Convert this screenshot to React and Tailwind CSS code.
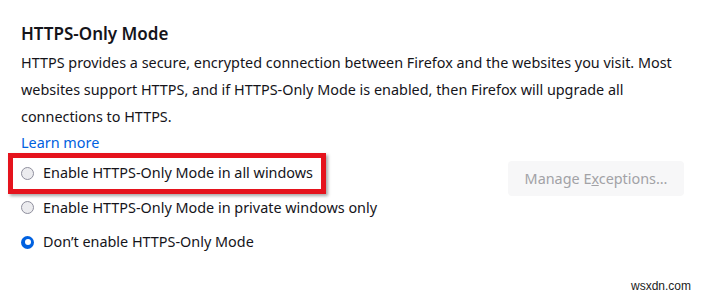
import React from "react";

function Radio({ checked }) {
  if (checked) {
    return (
      <span className="w-[13px] h-[13px] rounded-full bg-[#0061e0] flex items-center justify-center shrink-0">
        <span className="w-[6px] h-[6px] rounded-full bg-white" />
      </span>
    );
  }
  return (
    <span className="w-[13px] h-[13px] rounded-full border border-[#8f8f9d] bg-[#ececef] shrink-0" />
  );
}

function Option({ label, checked, highlight }) {
  return (
    <div className="relative inline-flex items-center gap-[9px] h-[34.5px] self-start">
      {highlight && (
        <div className="absolute -left-[13px] -right-[13px] -top-[3px] -bottom-[3px] border-[5px] border-[#e5131d] shadow-[2px_2px_3px_rgba(0,0,0,0.35)]" />
      )}
      <Radio checked={checked} />
      <span>{label}</span>
    </div>
  );
}

export default function App() {
  return (
    <div className="w-[702px] h-[299px] bg-white relative overflow-hidden text-[#15141a] text-[14.4px] font-['Noto_Sans',sans-serif]">
      <div className="pl-[21px] pt-[22px] pr-[18px]">
        <h2 className="text-[17px] font-semibold leading-[24px]">HTTPS-Only Mode</h2>
        <p className="mt-[3px] leading-[27px]">
          HTTPS provides a secure, encrypted connection between Firefox and the websites you visit. Most
          <br />
          websites support HTTPS, and if HTTPS-Only Mode is enabled, then Firefox will upgrade all
          <br />
          connections to HTTPS.
        </p>
        <a className="block text-[#0061e0] leading-[24px] mt-[1px]">Learn more</a>

        <div className="flex justify-between mt-[1px]">
          <div className="flex flex-col">
            <Option label="Enable HTTPS-Only Mode in all windows" highlight />
            <Option label="Enable HTTPS-Only Mode in private windows only" />
            <Option label="Don’t enable HTTPS-Only Mode" checked />
          </div>
          <button className="self-start mt-[5px] w-[176px] h-[35px] rounded-[4px] bg-[#f7f7f8] text-[#a2a2a6]">
            Manage E<span className="underline">x</span>ceptions…
          </button>
        </div>
      </div>

      <div className="absolute right-[11px] bottom-[4px] text-[12px] text-[#222] font-['Liberation_Sans',sans-serif]">
        wsxdn.com
      </div>
    </div>
  );
}
